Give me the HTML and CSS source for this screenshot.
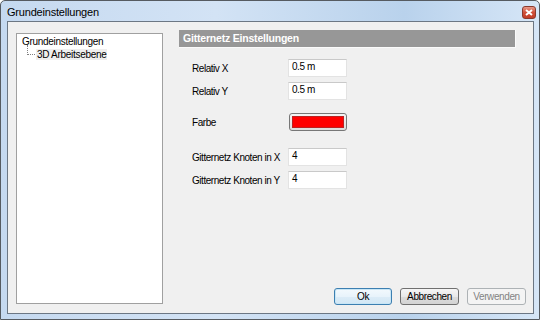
FILE: index.html
```html
<!DOCTYPE html>
<html>
<head>
<meta charset="utf-8">
<link rel="stylesheet" href="styles.css">
</head>
<body>
<div class="window">
  <div class="titlebar">
    <span class="title">Grundeinstellungen</span>
    <span class="close"><svg width="8" height="7" viewBox="0 0 8 7"><path d="M1 1 L7 6 M7 1 L1 6" stroke="#fff" stroke-width="2"/></svg></span>
  </div>
  <div class="client">
    <div class="tree">
      <div class="node root">Grundeinstellungen</div>
      <div class="node child"><span class="sel">3D Arbeitsebene</span></div>
    </div>
    <div class="main">
      <div class="header">Gitternetz Einstellungen</div>
      <div class="row r1"><span class="label">Relativ X</span><span class="input">0.5 m</span></div>
      <div class="row r2"><span class="label">Relativ Y</span><span class="input">0.5 m</span></div>
      <div class="row r3"><span class="label">Farbe</span><span class="colorbtn"><span class="swatch"></span></span></div>
      <div class="row r4"><span class="label">Gitternetz Knoten in X</span><span class="input">4</span></div>
      <div class="row r2"><span class="label">Gitternetz Knoten in Y</span><span class="input">4</span></div>
      <div class="buttons">
        <span class="btn default">Ok</span>
        <span class="btn">Abbrechen</span>
        <span class="btn disabled">Verwenden</span>
      </div>
    </div>
  </div>
</div>
</body>
</html>
```
FILE: styles.css
```css
html, body { margin: 0; padding: 0; }
body { width: 540px; height: 320px; overflow: hidden; background: #fff; font-family: "Liberation Sans", Arial, sans-serif; }
.window {
  box-sizing: border-box; width: 540px; height: 320px;
  border: 1px solid #565b61; border-radius: 5px 5px 0 0;
  background: linear-gradient(90deg, #c5d9f0 0%, #d3e3f5 40%, #b9d2ec 75%, #d6e6f7 100%);
  display: flex; flex-direction: column;
}
.titlebar { height: 20px; display: flex; align-items: center; padding: 0 3px 0 6px; }
.title { font-size: 11px; letter-spacing: -0.2px; color: #000; flex: 1; padding-top: 1px; }
.close {
  width: 14px; height: 13px; box-sizing: border-box; margin-top: 3px;
  border: 1px solid #8a3a2e; border-radius: 3px;
  background: linear-gradient(#e89a8a, #d0503a 50%, #c23d28);
  display: flex; align-items: center; justify-content: center;
}
.client {
  flex: 1; margin: 0 5px 5px 6px;
  border: 1px solid #6c7784; background: #f0f0f0;
  display: flex; padding-left: 8px;
}
.tree {
  width: 145px; height: 269px; margin-top: 11px;
  background: #fff; border: 1px solid #a0a0a0;
  font-size: 10px; letter-spacing: -0.3px; color: #000;
}
.node { height: 13px; line-height: 13px; }
.root { padding-left: 5px; margin-top: 1px; }
.child { padding-left: 19px; position: relative; }
.child::before {
  content: ""; position: absolute; left: 10px; top: -3px; width: 7px; height: 9px;
  border-left: 1px dotted #808080; border-bottom: 1px dotted #808080;
}
.sel { background: #eeeeee; padding: 0 1px; }
.main { flex: 1; display: flex; flex-direction: column; margin-left: 16px; margin-right: 7px; font-size: 10px; letter-spacing: -0.45px; }
.header {
  width: 337px; height: 18px; margin-top: 8px; box-sizing: border-box;
  background: #979797; color: #fff; font-weight: bold; font-size: 10.5px; letter-spacing: -0.2px;
  padding-left: 4px; line-height: 17px;
  border-right: 1px solid #fafafa; border-bottom: 1px solid #fafafa;
}
.row { display: flex; align-items: center; height: 18px; }
.r1 { margin-top: 11px; }
.r2 { margin-top: 5px; }
.r3 { margin-top: 13px; }
.r4 { margin-top: 17px; }
.label { width: 96px; margin-left: 13px; color: #000; }
.input {
  width: 59px; height: 18px; box-sizing: border-box;
  background: #fff; border: 1px solid #e3e3e3; border-top-color: #c9c9c9;
  padding: 1px 0 0 3px; line-height: 12px; color: #000;
}
.colorbtn {
  width: 58px; height: 18px; box-sizing: border-box; margin-left: 1px;
  border: 1px solid #777; border-radius: 3px;
  background: linear-gradient(#f4f4f4, #dcdcdc);
  padding: 2px;
}
.swatch { display: block; height: 100%; background: #ff0000; border: 1px solid #b22; box-sizing: border-box; }
.buttons { margin-top: auto; margin-bottom: 8px; display: flex; justify-content: flex-end; gap: 8px; }
.btn {
  width: 59px; height: 17px; box-sizing: border-box;
  border: 1px solid #707070; border-radius: 3px;
  background: linear-gradient(#f6f6f6, #e9e9e9 50%, #dcdcdc 51%, #d3d3d3);
  display: flex; align-items: center; justify-content: center;
  font-size: 10px; letter-spacing: -0.4px; color: #000;
}
.default { width: 58px; border-color: #3c7fb1; box-shadow: inset 0 0 0 1px #c8e6f6; background: linear-gradient(#f3f9fd, #e8f3fb 50%, #dcecf7 51%, #d2e7f5); }
.disabled { border-color: #adb2b5; background: #f4f4f4; color: #838383; }
```
